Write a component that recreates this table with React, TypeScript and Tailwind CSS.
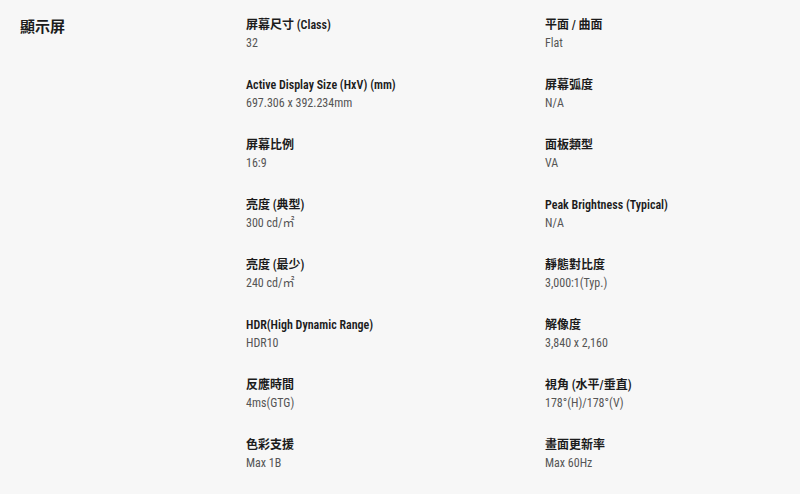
import React from "react";

interface Spec {
  label: string;
  value: string;
}

const SPECS: Spec[] = [
  { label: "屏幕尺寸 (Class)", value: "32" },
  { label: "平面 / 曲面", value: "Flat" },
  { label: "Active Display Size (HxV) (mm)", value: "697.306 x 392.234mm" },
  { label: "屏幕弧度", value: "N/A" },
  { label: "屏幕比例", value: "16:9" },
  { label: "面板類型", value: "VA" },
  { label: "亮度 (典型)", value: "300 cd/㎡" },
  { label: "Peak Brightness (Typical)", value: "N/A" },
  { label: "亮度 (最少)", value: "240 cd/㎡" },
  { label: "靜態對比度", value: "3,000:1(Typ.)" },
  { label: "HDR(High Dynamic Range)", value: "HDR10" },
  { label: "解像度", value: "3,840 x 2,160" },
  { label: "反應時間", value: "4ms(GTG)" },
  { label: "視角 (水平/垂直)", value: "178°(H)/178°(V)" },
  { label: "色彩支援", value: "Max 1B" },
  { label: "畫面更新率", value: "Max 60Hz" },
];

const font = {
  fontFamily: 'Roboto, "Noto Sans CJK TC", sans-serif',
};

const SpecItem: React.FC<Spec> = ({ label, value }) => (
  <div className="h-[60px]">
    <p className="text-[12px] font-semibold leading-[18px] font-stretch-condensed text-[#1c1c1c]">
      {label}
    </p>
    <p className="text-[12px] leading-[18px] font-stretch-condensed text-[#555555]">{value}</p>
  </div>
);

export default function App() {
  return (
    <div className="min-h-[494px] bg-[#f7f7f7]" style={font}>
      <section className="flex pt-[16px]">
        <h2 className="w-[246px] pl-[20px] pt-[1px] text-[15px] font-semibold leading-[20px] text-[#1c1c1c]">
          顯示屏
        </h2>
        <div className="grid w-[500px] grid-cols-[299px_1fr]">
          {SPECS.map((s) => (
            <SpecItem key={s.label} label={s.label} value={s.value} />
          ))}
        </div>
      </section>
    </div>
  );
}
